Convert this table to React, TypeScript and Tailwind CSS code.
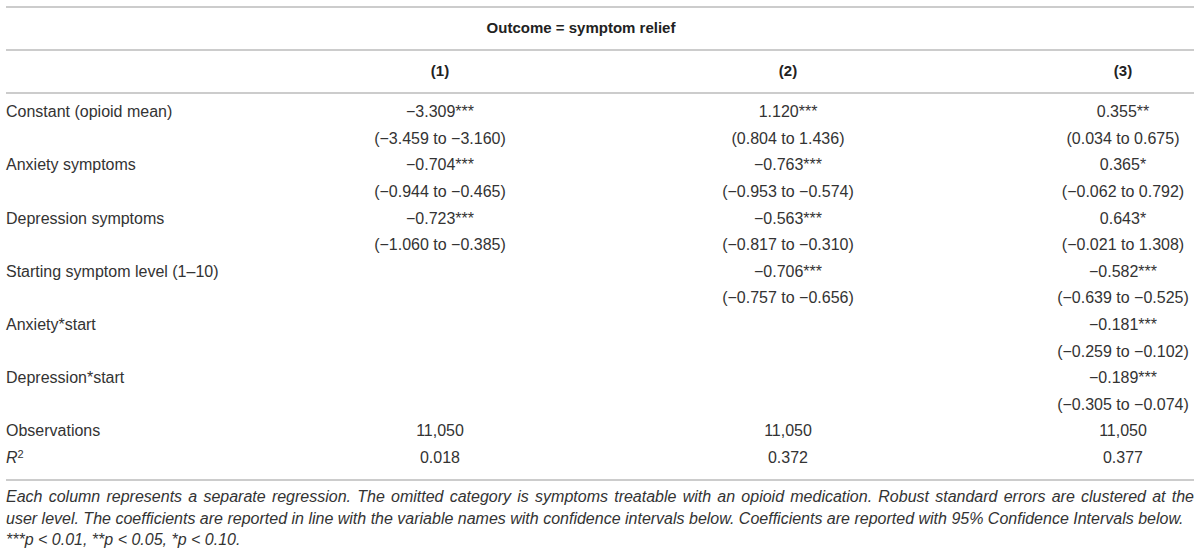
import React from "react";

type Row = { label: React.ReactNode; c1?: string; c2?: string; c3?: string };

const rows: Row[] = [
  { label: "Constant (opioid mean)", c1: "−3.309***", c2: "1.120***", c3: "0.355**" },
  { label: "", c1: "(−3.459 to −3.160)", c2: "(0.804 to 1.436)", c3: "(0.034 to 0.675)" },
  { label: "Anxiety symptoms", c1: "−0.704***", c2: "−0.763***", c3: "0.365*" },
  { label: "", c1: "(−0.944 to −0.465)", c2: "(−0.953 to −0.574)", c3: "(−0.062 to 0.792)" },
  { label: "Depression symptoms", c1: "−0.723***", c2: "−0.563***", c3: "0.643*" },
  { label: "", c1: "(−1.060 to −0.385)", c2: "(−0.817 to −0.310)", c3: "(−0.021 to 1.308)" },
  { label: "Starting symptom level (1–10)", c1: "", c2: "−0.706***", c3: "−0.582***" },
  { label: "", c1: "", c2: "(−0.757 to −0.656)", c3: "(−0.639 to −0.525)" },
  { label: "Anxiety*start", c1: "", c2: "", c3: "−0.181***" },
  { label: "", c1: "", c2: "", c3: "(−0.259 to −0.102)" },
  { label: "Depression*start", c1: "", c2: "", c3: "−0.189***" },
  { label: "", c1: "", c2: "", c3: "(−0.305 to −0.074)" },
  { label: "Observations", c1: "11,050", c2: "11,050", c3: "11,050" },
  {
    label: (
      <span>
        <i>R</i>
        <sup className="text-[11px]">2</sup>
      </span>
    ),
    c1: "0.018",
    c2: "0.372",
    c3: "0.377",
  },
];

export default function App() {
  return (
    <div
      className="w-[1200px] h-[552px] bg-white px-[6px] pt-[6px] text-[#333333] text-[16px]"
      style={{ fontFamily: '"Liberation Sans", Arial, sans-serif' }}
    >
      <div className="border-t-2 border-[#cccccc]" />
      <div className="grid grid-cols-[350px_168px_528px_142px]">
        <div className="col-span-4 h-[41px] flex items-center justify-center pr-[38px] font-bold text-[15px] text-[#222]">
          Outcome = symptom relief
        </div>
        <div className="col-span-4 border-t-2 border-[#cccccc]" />
        <div className="h-[41px]" />
        <div className="h-[41px] flex items-center justify-center font-bold text-[15px] text-[#222]">(1)</div>
        <div className="h-[41px] flex items-center justify-center font-bold text-[15px] text-[#222]">(2)</div>
        <div className="h-[41px] flex items-center justify-center font-bold text-[15px] text-[#222]">(3)</div>
        <div className="col-span-4 border-t-2 border-[#cccccc] mb-[5px]" />
        {rows.map((r, i) => (
          <React.Fragment key={i}>
            <div className="h-[26.6px] flex items-center whitespace-nowrap">{r.label}</div>
            <div className="h-[26.6px] flex items-center justify-center whitespace-nowrap">{r.c1}</div>
            <div className="h-[26.6px] flex items-center justify-center whitespace-nowrap">{r.c2}</div>
            <div className="h-[26.6px] flex items-center justify-center whitespace-nowrap">{r.c3}</div>
          </React.Fragment>
        ))}
        <div className="col-span-4 border-t-2 border-[#cccccc] mt-[8px]" />
      </div>
      <div className="italic leading-[21.5px] mt-[5px] text-[#333333]">
        <p className="text-justify [text-align-last:justify] whitespace-nowrap">
          Each column represents a separate regression. The omitted category is symptoms treatable with an opioid
          medication. Robust standard errors are clustered at the
        </p>
        <p className="whitespace-nowrap">
          user level. The coefficients are reported in line with the variable names with confidence intervals below.
          Coefficients are reported with 95% Confidence Intervals below.
        </p>
        <p>***p &lt; 0.01, **p &lt; 0.05, *p &lt; 0.10.</p>
      </div>
    </div>
  );
}
